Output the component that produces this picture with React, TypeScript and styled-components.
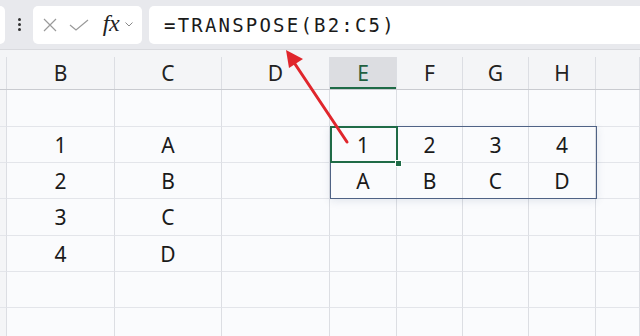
import styled, { createGlobalStyle } from "styled-components";

const GlobalStyle = createGlobalStyle`
  html, body {
    margin: 0;
    padding: 0;
    background: #fafbfd;
  }
  body {
    font-family: "Noto Sans", "Open Sans", sans-serif;
    overflow: hidden;
  }
`;

const Page = styled.div`
  position: relative;
  width: 640px;
  height: 336px;
  overflow: hidden;
  background: #fafbfd;
`;

const Toolbar = styled.div`
  height: 50px;
  background: #e8e9ed;
  display: flex;
  align-items: center;
  box-sizing: border-box;
  border-bottom: 1px solid #d9dade;
`;

const NameBox = styled.div`
  width: 5px;
  height: 38px;
  background: #fff;
  border-radius: 0 5px 5px 0;
`;

const Kebab = styled.div`
  width: 28px;
  display: flex;
  flex-direction: column;
  align-items: center;
  gap: 2px;
  span {
    width: 3px;
    height: 3px;
    border-radius: 50%;
    background: #333;
  }
`;

const IconBox = styled.div`
  width: 109px;
  height: 38px;
  background: #fff;
  border-radius: 5px;
  display: flex;
  align-items: center;
  padding-left: 8px;
  box-sizing: border-box;
`;

const IconSlot = styled.div<{ w: number }>`
  width: ${(p) => p.w}px;
  display: flex;
  align-items: center;
  justify-content: center;
`;

const Fx = styled.span`
  font-family: "Liberation Serif", "DejaVu Serif", serif;
  font-style: italic;
  font-size: 24px;
  color: #222;
  letter-spacing: -0.5px;
  margin-top: -3px;
`;

const FormulaBox = styled.div`
  flex: 1;
  height: 38px;
  margin-left: 7px;
  background: #fff;
  border-radius: 5px 0 0 5px;
  display: flex;
  align-items: center;
  padding-left: 15px;
  font-family: "DejaVu Sans Mono", "Liberation Mono", monospace;
  font-size: 19px;
  letter-spacing: 2.2px;
  color: #1a1a1a;
`;

const cols = "7px 108px 107px 108px 67px 66px 66px 67px 1fr";

const HeaderRow = styled.div`
  display: grid;
  grid-template-columns: ${cols};
  height: 40px;
  padding-top: 7px;
  box-sizing: border-box;
  background: #f4f5f7;
  border-bottom: 1px solid #c9cbd0;
`;

const ColHead = styled.div<{ active?: boolean }>`
  display: flex;
  align-items: center;
  justify-content: center;
  font-size: 21px;
  color: ${(p) => (p.active ? "#1f5f3f" : "#222")};
  background: ${(p) => (p.active ? "#dcdde1" : "transparent")};
  border-right: 1px solid #dcdee3;
  box-shadow: ${(p) => (p.active ? "inset 0 -2px 0 #1f6b47" : "none")};
`;

const Body = styled.div`
  position: relative;
  display: grid;
  grid-template-columns: ${cols};
  grid-template-rows: 37px 36px 36px 37px 36px 36px 36px;
`;

const Cell = styled.div<{ rowHead?: boolean }>`
  display: flex;
  align-items: center;
  justify-content: center;
  font-size: 21px;
  color: #1a1a1a;
  border-right: 1px solid #dcdee3;
  border-bottom: 1px solid #e3e5ea;
  background: ${(p) => (p.rowHead ? "#f4f5f7" : "transparent")};
`;

const Selection = styled.div`
  position: absolute;
  left: 330px;
  top: 36px;
  width: 267px;
  height: 73px;
  box-sizing: border-box;
  border: 1.5px solid #4f6285;
  box-shadow: 0 2px 8px rgba(60, 80, 120, 0.12);
  pointer-events: none;
`;

const ActiveCell = styled.div`
  position: absolute;
  left: 330px;
  top: 36px;
  width: 68px;
  height: 37px;
  box-sizing: border-box;
  border: 2px solid #1f6b47;
  pointer-events: none;
`;

const FillHandle = styled.div`
  position: absolute;
  left: 395px;
  top: 70px;
  width: 5px;
  height: 5px;
  background: #1f6b47;
  border: 1px solid #fff;
`;

const ArrowLayer = styled.svg`
  position: absolute;
  left: 0;
  top: 0;
  pointer-events: none;
`;

const headers = ["", "B", "C", "D", "E", "F", "G", "H", ""];

const rows: string[][] = [
  ["", "", "", "", "", "", "", "", ""],
  ["", "1", "A", "", "1", "2", "3", "4", ""],
  ["", "2", "B", "", "A", "B", "C", "D", ""],
  ["", "3", "C", "", "", "", "", "", ""],
  ["", "4", "D", "", "", "", "", "", ""],
  ["", "", "", "", "", "", "", "", ""],
  ["", "", "", "", "", "", "", "", ""],
];

export default function App() {
  return (
    <Page>
      <GlobalStyle />
      <Toolbar>
        <NameBox />
        <Kebab>
          <span />
          <span />
          <span />
        </Kebab>
        <IconBox>
          <IconSlot w={18}>
            <svg width="14" height="14" viewBox="0 0 14 14">
              <path d="M1 1L13 13M13 1L1 13" stroke="#9a9a9a" strokeWidth="1.2" fill="none" />
            </svg>
          </IconSlot>
          <IconSlot w={40}>
            <svg width="20" height="12" viewBox="0 0 20 12">
              <path d="M1 6L7 11L19 1" stroke="#9a9a9a" strokeWidth="1.2" fill="none" />
            </svg>
          </IconSlot>
          <IconSlot w={24}>
            <Fx>fx</Fx>
          </IconSlot>
          <IconSlot w={12}>
            <svg width="8" height="5" viewBox="0 0 8 5">
              <path d="M0.5 0.5L4 4L7.5 0.5" stroke="#888" strokeWidth="1" fill="none" />
            </svg>
          </IconSlot>
        </IconBox>
        <FormulaBox>=TRANSPOSE(B2:C5)</FormulaBox>
      </Toolbar>
      <HeaderRow>
        {headers.map((h, i) => (
          <ColHead key={i} active={h === "E"}>
            {h}
          </ColHead>
        ))}
      </HeaderRow>
      <Body>
        {rows.map((r, ri) =>
          r.map((v, ci) => (
            <Cell key={`${ri}-${ci}`} rowHead={ci === 0}>
              {v}
            </Cell>
          ))
        )}
        <Selection />
        <ActiveCell />
        <FillHandle />
      </Body>
      <ArrowLayer width="640" height="336" viewBox="0 0 640 336">
        <line x1="347" y1="142" x2="293" y2="61" stroke="#e0262c" strokeWidth="3" strokeLinecap="round" />
        <polygon points="286,50 303,59 289,68" fill="#e0262c" />
      </ArrowLayer>
    </Page>
  );
}
